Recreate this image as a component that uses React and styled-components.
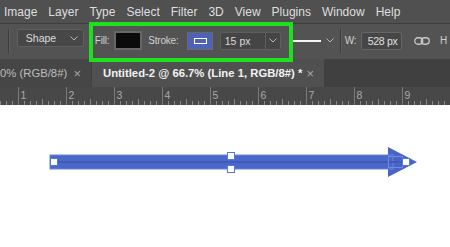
import React from 'react';
import styled, { createGlobalStyle } from 'styled-components';

const GlobalStyle = createGlobalStyle`
    html, body {
        margin: 0;
        padding: 0;
        background: #ffffff;
        overflow: hidden;
    }
    body {
        font-family: "Liberation Sans", Arial, sans-serif;
    }
`

const menuItems = ['Image', 'Layer', 'Type', 'Select', 'Filter', '3D', 'View', 'Plugins', 'Window', 'Help'];

const Chevron = () => (
    <svg width="8" height="5" viewBox="0 0 8 5">
        <path d="M0.5 0.5 L4 4 L7.5 0.5" fill="none" stroke="#b5b5b5" strokeWidth="1" />
    </svg>
)

const LinkIcon = () => (
    <svg width="16" height="8" viewBox="0 0 16 8">
        <rect x="0.75" y="0.75" width="8" height="6.5" rx="3.2" fill="none" stroke="#c8c8c8" strokeWidth="1.3" />
        <rect x="7.25" y="0.75" width="8" height="6.5" rx="3.2" fill="none" stroke="#c8c8c8" strokeWidth="1.3" />
    </svg>
)

function RulerTicks() {
    const ticks = [];
    for (let i = -3; i < 80; i++) {
        const x = 18.5 + i * 6;
        if (x < 0 || x > 450) continue;
        const major = i % 8 === 0;
        const half = Math.abs(i % 8) === 4;
        if (major) continue;
        ticks.push(<line key={i} x1={x} x2={x} y1={half ? 12 : 14} y2={18} stroke="#8a8a8a" strokeWidth="1" />);
    }
    const majors = [];
    for (let k = 0; k < 9; k++) {
        const x = 18.5 + k * 48;
        majors.push(
            <g key={'m' + k}>
                <line x1={x} x2={x} y1={0} y2={18} stroke="#7a7a7a" strokeWidth="1" />
                <text x={x + 2} y={12} fontSize="10.5" fill="#a8a8a8" fontFamily="Liberation Sans, Arial, sans-serif">{k + 1}</text>
            </g>
        );
    }
    return (
        <svg width="450" height="18" style={{ display: 'block' }}>
            {ticks}
            {majors}
        </svg>
    );
}

function Arrow() {
    return (
        <svg width="450" height="142" style={{ display: 'block' }}>
            <polygon points="388,42 417,57 388,72" fill="#4a64c6" />
            <rect x="50" y="50" width="343" height="14" fill="#4b68c9" stroke="#6088e0" strokeWidth="1" />
            <line x1="54" y1="57" x2="402" y2="57" stroke="#4059ba" strokeWidth="2" />
            <rect x="388.5" y="51.5" width="14" height="11" fill="none" stroke="#6a8ce2" strokeWidth="1" />
            <Handle x={50} y={53} />
            <Handle x={227} y={47} />
            <Handle x={227} y={60} />
            <Handle x={402} y={53} />
        </svg>
    );
}

const Handle = ({ x, y }) => (
    <rect x={x + 0.5} y={y + 0.5} width="7" height="7" fill="#ffffff" stroke="#5478d8" strokeWidth="1" />
)

export default function App() {
    return (
        <Screen>
            <GlobalStyle />
            <MenuBar>
                {menuItems.map((m) => (
                    <MenuItem key={m}>{m}</MenuItem>
                ))}
            </MenuBar>

            <OptionsBar>
                <Stub />
                <Separator />
                <ShapeSelect>
                    <span>Shape</span>
                    <Chevron />
                </ShapeSelect>
                <Label $w={14} $ml={11}>Fill:</Label>
                <FillSwatch />
                <Label $w={32} $ml={6}>Stroke:</Label>
                <StrokeSwatch>
                    <StrokeGlyph />
                </StrokeSwatch>
                <SizeSelect>
                    <SizeValue>15 px</SizeValue>
                    <SizeArrow><Chevron /></SizeArrow>
                </SizeSelect>
                <LineStyle>
                    <LineSample />
                    <Chevron />
                </LineStyle>
                <Separator $ml={5} />
                <Label $w={14} $ml={3}>W:</Label>
                <ValueBox>528 px</ValueBox>
                <IconSlot><LinkIcon /></IconSlot>
                <Label $w={10} $ml={10}>H</Label>
                <Highlight />
            </OptionsBar>

            <TabBar>
                <Tab>
                    <TabTitle>0% (RGB/8#)</TabTitle>
                    <Close>×</Close>
                </Tab>
                <Tab $active>
                    <TabTitle $active>Untitled-2 @ 66.7% (Line 1, RGB/8#) *</TabTitle>
                    <Close>×</Close>
                </Tab>
            </TabBar>

            <Ruler>
                <RulerTicks />
            </Ruler>

            <Canvas>
                <Arrow />
            </Canvas>
        </Screen>
    )
}

const Screen = styled.div`
    width: 450px;
    height: 247px;
    overflow: hidden;
    display: flex;
    flex-direction: column;
    background: #ffffff;
`

const MenuBar = styled.div`
    height: 23px;
    flex: none;
    display: flex;
    align-items: center;
    gap: 11px;
    padding-left: 4px;
    background: #505050;
    border-bottom: 1px solid #3e3e3e;
`

const MenuItem = styled.span`
    font-size: 12px;
    color: #dedede;
    white-space: nowrap;
`

const OptionsBar = styled.div`
    position: relative;
    z-index: 2;
    height: 35px;
    flex: none;
    display: flex;
    align-items: center;
    padding-bottom: 2px;
    box-sizing: border-box;
    background: #535353;
    font-size: 10px;
    color: #d4d4d4;
`

const Stub = styled.div`
    width: 8px;
    align-self: stretch;
`

const Separator = styled.div`
    width: 1px;
    height: 24px;
    margin-left: ${p => p.$ml || 0}px;
    background: #3c3c3c;
    border-right: 1px solid #5e5e5e;
`

const ShapeSelect = styled.div`
    box-sizing: border-box;
    width: 68px;
    height: 18px;
    margin-left: 7px;
    align-self: flex-start;
    margin-top: 5px;
    padding: 0 5px 0 8px;
    display: flex;
    align-items: center;
    justify-content: space-between;
    background: #474747;
    border: 1px solid #5f5f5f;
    border-radius: 2px;
    font-size: 10.5px;
    color: #dcdcdc;
`

const Label = styled.span`
    width: ${p => p.$w}px;
    margin-left: ${p => p.$ml}px;
    flex: none;
    white-space: nowrap;
    font-size: 10px;
    letter-spacing: -0.2px;
    color: #d0d0d0;
`

const FillSwatch = styled.div`
    box-sizing: border-box;
    width: 29px;
    height: 19px;
    margin-left: 5px;
    background: #0b0b0b;
    border: 2px solid #676767;
`

const StrokeSwatch = styled.div`
    box-sizing: border-box;
    width: 26px;
    height: 18px;
    margin-left: 7px;
    display: flex;
    align-items: center;
    justify-content: center;
    background: #4f62b6;
    border: 1px solid #6a6a6a;
`

const StrokeGlyph = styled.div`
    box-sizing: border-box;
    width: 13px;
    height: 6px;
    border: 1.5px solid #ffffff;
`

const SizeSelect = styled.div`
    box-sizing: border-box;
    width: 62px;
    height: 18px;
    margin-left: 7px;
    display: flex;
    background: #454545;
    border: 1px solid #5e5e5e;
    border-radius: 2px;
`

const SizeValue = styled.span`
    flex: 1;
    padding-left: 4px;
    display: flex;
    align-items: center;
    font-size: 10.5px;
    color: #dcdcdc;
`

const SizeArrow = styled.span`
    width: 14px;
    display: flex;
    align-items: center;
    justify-content: center;
    border-left: 1px solid #5e5e5e;
`

const LineStyle = styled.div`
    width: 45px;
    height: 18px;
    margin-left: 10px;
    display: flex;
    align-items: center;
    gap: 5px;
`

const LineSample = styled.div`
    width: 30px;
    height: 2px;
    background: #f4f4f4;
`

const ValueBox = styled.div`
    box-sizing: border-box;
    width: 42px;
    height: 18px;
    margin-left: 2px;
    padding-left: 6px;
    display: flex;
    align-items: center;
    background: #464646;
    border: 1px solid #666666;
    border-radius: 2px;
    font-size: 10.5px;
    letter-spacing: -0.3px;
    color: #e0e0e0;
`

const IconSlot = styled.div`
    margin-left: 12px;
    display: flex;
    align-items: center;
`

const Highlight = styled.div`
    position: absolute;
    left: 89px;
    top: -2px;
    width: 204px;
    height: 40px;
    box-sizing: border-box;
    border: 4px solid #1ee01e;
    pointer-events: none;
`

const TabBar = styled.div`
    height: 28px;
    flex: none;
    display: flex;
    gap: 1px;
    background: #404040;
`

const Tab = styled.div`
    width: ${p => p.$active ? '232px' : '91px'};
    box-sizing: border-box;
    padding: 0 10px 0 ${p => p.$active ? '11px' : '0'};
    display: flex;
    align-items: center;
    justify-content: space-between;
    background: ${p => p.$active ? '#505050' : '#464646'};
    overflow: hidden;
`

const TabTitle = styled.span`
    white-space: nowrap;
    font-size: 11.3px;
    font-weight: ${p => p.$active ? 'bold' : 'normal'};
    color: ${p => p.$active ? '#f2f2f2' : '#bdbdbd'};
`

const Close = styled.span`
    font-size: 13px;
    color: #a5a5a5;
`

const Ruler = styled.div`
    height: 18px;
    flex: none;
    background: #484848;
`

const Canvas = styled.div`
    flex: 1;
    background: #ffffff;
`
